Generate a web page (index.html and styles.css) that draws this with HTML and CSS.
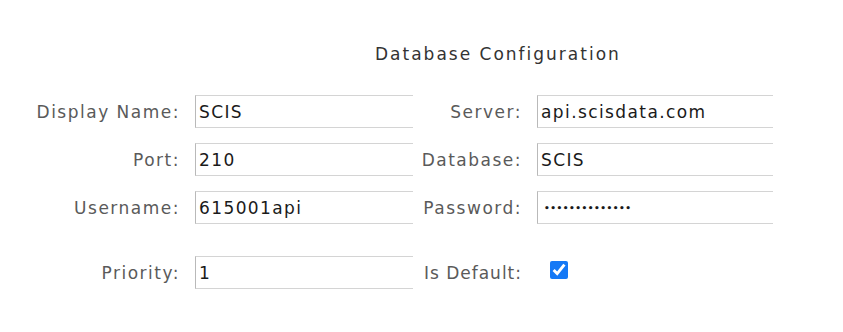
FILE: index.html
```html
<!DOCTYPE html>
<html lang="en">
<head>
<meta charset="utf-8">
<title>Database Configuration</title>
<link rel="stylesheet" href="styles.css">
</head>
<body>
<div class="page">
  <h1 class="title">Database Configuration</h1>
  <form class="form">
    <label class="label" for="dn">Display Name:</label>
    <div class="field"><input id="dn" class="input" type="text" value="SCIS"></div>
    <label class="label" for="srv">Server:</label>
    <div class="field"><input id="srv" class="input" type="text" value="api.scisdata.com"></div>

    <label class="label" for="port">Port:</label>
    <div class="field"><input id="port" class="input" type="text" value="210"></div>
    <label class="label" for="db">Database:</label>
    <div class="field"><input id="db" class="input" type="text" value="SCIS"></div>

    <label class="label" for="user">Username:</label>
    <div class="field"><input id="user" class="input" type="text" value="615001api"></div>
    <label class="label" for="pw">Password:</label>
    <div class="field"><input id="pw" class="input input-pw" type="password" value="abcdefghijklmn"></div>

    <label class="label spaced" for="prio">Priority:</label>
    <div class="field spaced"><input id="prio" class="input" type="text" value="1"></div>
    <label class="label label-tight spaced" for="def">Is Default:</label>
    <div class="field spaced check-cell"><input id="def" class="check" type="checkbox" checked></div>
  </form>
</div>
</body>
</html>
```
FILE: styles.css
```css
html, body {
  margin: 0;
  padding: 0;
  background: #ffffff;
}

body {
  font-family: "DejaVu Sans", sans-serif;
  font-size: 17px;
  letter-spacing: 1.5px;
  color: #5a5a5a;
}

.page {
  padding-top: 42px;
}

.title {
  margin: 0;
  padding-left: 375px;
  font-size: 17px;
  font-weight: normal;
  letter-spacing: 2px;
  line-height: 24px;
  color: #333333;
}

.form {
  margin-top: 29px;
  display: grid;
  grid-template-columns: 195px 218px 124px 236px;
  grid-auto-rows: auto;
  row-gap: 15px;
}

.label {
  height: 33px;
  display: flex;
  align-items: center;
  justify-content: flex-end;
  padding-right: 15px;
  white-space: nowrap;
}

.label-tight {
  letter-spacing: 1px;
}

.field {
  height: 33px;
  overflow: hidden;
  display: flex;
}

.spaced {
  margin-top: 17px;
}

.input {
  box-sizing: border-box;
  width: 100%;
  height: 33px;
  margin: 0;
  padding: 0 3px;
  border: 1px solid #d4d4d4;
  border-left-color: #b9b9b9;
  border-right: none;
  border-radius: 0;
  font-family: "DejaVu Sans", sans-serif;
  font-size: 17px;
  letter-spacing: 1.4px;
  color: #1a1a1a;
  background: #ffffff;
  outline: none;
}

.input-pw {
  font-size: 9px;
  letter-spacing: 0.5px;
  padding-left: 6px;
  font-weight: bold;
}

.check-cell {
  align-items: center;
}

.check {
  width: 18px;
  height: 18px;
  margin: -6px 0 0 13px;
  accent-color: #1579f6;
}
```
